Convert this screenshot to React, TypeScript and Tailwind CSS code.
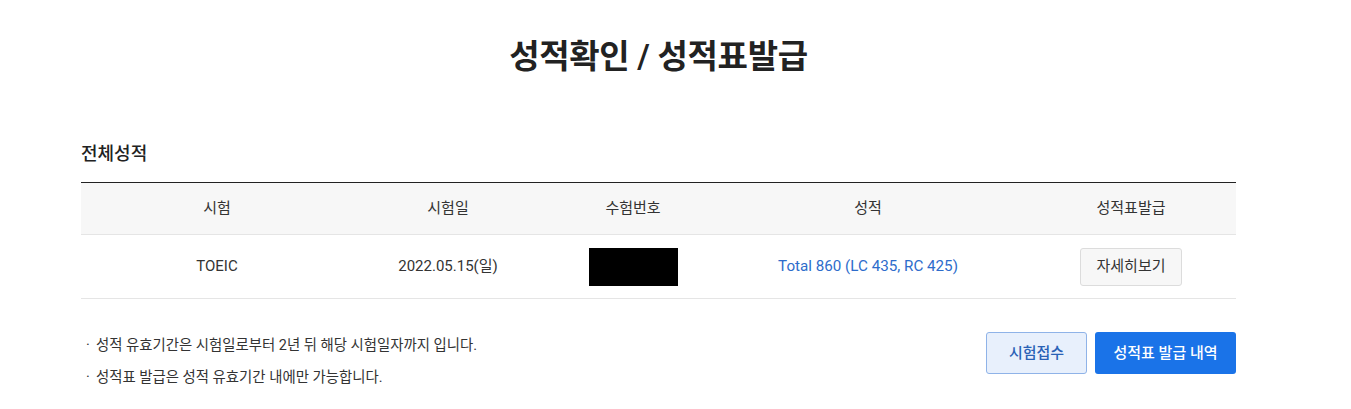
const font = "font-['Roboto','Noto_Sans_CJK_KR',sans-serif]";

interface ScoreRow {
  test: string;
  date: string;
  score: string;
}

const rows: ScoreRow[] = [
  { test: "TOEIC", date: "2022.05.15(일)", score: "Total 860 (LC 435, RC 425)" },
];

const notes = [
  "성적 유효기간은 시험일로부터 2년 뒤 해당 시험일자까지 입니다.",
  "성적표 발급은 성적 유효기간 내에만 가능합니다.",
];

export default function App() {
  return (
    <div className={`${font} min-h-[409px] w-[1351px] bg-white text-[#333]`}>
      <div className="ml-[81px] w-[1155px]">
        <h1 className="pt-[33px] text-center text-[33px] font-semibold leading-[48px] tracking-[-0.3px] text-[#222]">
          성적확인 / 성적표발급
        </h1>

        <h2 className="mt-[59px] text-[18px] font-medium leading-[28px] text-[#222]">전체성적</h2>

        <div className="mt-[14px] border-t border-[#222]">
          <div className="grid h-[52px] grid-cols-[272px_190px_180px_290px_223px] items-center border-b border-[#e5e5e5] bg-[#f7f7f7] text-center text-[15px]">
            <div>시험</div>
            <div>시험일</div>
            <div>수험번호</div>
            <div>성적</div>
            <div className="pl-[13px]">성적표발급</div>
          </div>
          {rows.map((row) => (
            <div
              key={row.test}
              className="grid h-[64px] grid-cols-[272px_190px_180px_290px_223px] items-center border-b border-[#e5e5e5] text-center text-[15px]"
            >
              <div>{row.test}</div>
              <div>{row.date}</div>
              <div className="flex justify-center">
                <div className="h-[38px] w-[89px] bg-black" />
              </div>
              <div className="text-[15.2px] text-[#2d6ccb]">{row.score}</div>
              <div className="flex justify-center pl-[13px]">
                <button
                  type="button"
                  className="h-[38px] w-[102px] rounded-[3px] border border-[#dcdcdc] bg-[#f7f7f7] text-[15px] text-[#333]"
                >
                  자세히보기
                </button>
              </div>
            </div>
          ))}
        </div>

        <div className="mt-[33px] flex items-start justify-between">
          <ul className="flex flex-col gap-[10px] pt-[3px] text-[14.4px] leading-[22px] text-[#333]">
            {notes.map((note) => (
              <li key={note} className="flex">
                <span className="w-[15px] pl-[5px]">·</span>
                <span>{note}</span>
              </li>
            ))}
          </ul>
          <div className="flex gap-[8px]">
            <button
              type="button"
              className="h-[42px] w-[101px] rounded-[3px] border border-[#8fb3e8] bg-[#e8f0fc] text-[15px] font-medium text-[#2a62b6]"
            >
              시험접수
            </button>
            <button
              type="button"
              className="h-[42px] w-[141px] rounded-[3px] bg-[#1a73e8] text-[15px] font-medium text-white"
            >
              성적표 발급 내역
            </button>
          </div>
        </div>
      </div>
    </div>
  );
}
